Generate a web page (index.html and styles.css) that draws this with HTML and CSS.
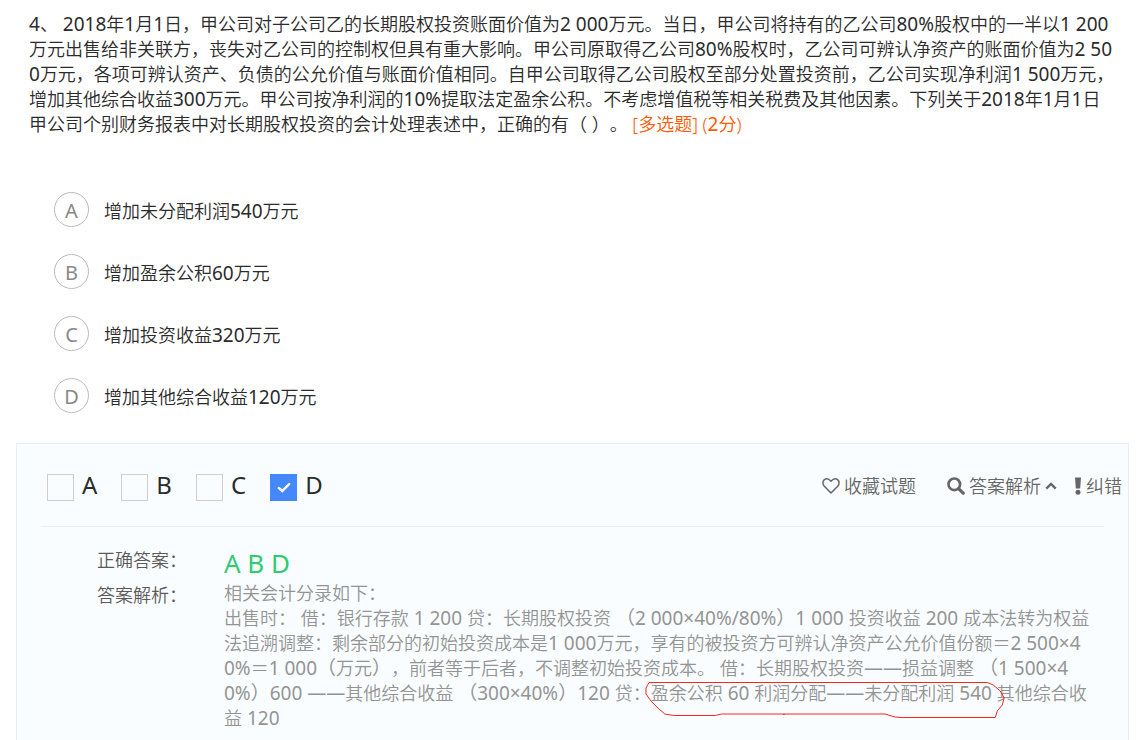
FILE: index.html
```html
<!DOCTYPE html>
<html lang="zh-CN">
<head>
    <meta charset="UTF-8">
    <meta name="viewport" content="width=device-width, initial-scale=1.0">
    <title>多选题</title>
    <link rel="stylesheet" href="styles.css">
</head>
<body>
    <div class="question">
        <p>
            <span class="num">4</span>、<span class="num"> 2018</span>年<span class="num">1</span>月<span class="num">1</span>日，甲公司对子公司乙的长期股权投资账面价值为<span class="num">2 000</span>万元。当日，甲公司将持有的乙公司<span class="num">80%</span>股权中的一半以<span class="num">1 200</span><br>万元出售给非关联方，丧失对乙公司的控制权但具有重大影响。甲公司原取得乙公司<span class="num">80%</span>股权时，乙公司可辨认净资产的账面价值为<span class="num">2 50</span><br><span class="num">0</span>万元，各项可辨认资产、负债的公允价值与账面价值相同。自甲公司取得乙公司股权至部分处置投资前，乙公司实现净利润<span class="num">1 500</span>万元，<br>增加其他综合收益<span class="num">300</span>万元。甲公司按净利润的<span class="num">10%</span>提取法定盈余公积。不考虑增值税等相关税费及其他因素。下列关于<span class="num">2018</span>年<span class="num">1</span>月<span class="num">1</span>日<br>甲公司个别财务报表中对长期股权投资的会计处理表述中，正确的有（ ）。 <span class="tag">[多选题] (<span class="num">2</span>分)</span>
        </p>
    </div>
    <ul class="options">
        <li><span class="letter">A</span><span class="option-text">增加未分配利润<span class="num">540</span>万元</span></li>
        <li><span class="letter">B</span><span class="option-text">增加盈余公积<span class="num">60</span>万元</span></li>
        <li><span class="letter">C</span><span class="option-text">增加投资收益<span class="num">320</span>万元</span></li>
        <li><span class="letter">D</span><span class="option-text">增加其他综合收益<span class="num">120</span>万元</span></li>
    </ul>
    <div class="panel">
        <div class="toolbar">
            <div class="choices">
                <label><input type="checkbox" name="answer" value="A"><span>A</span></label>
                <label><input type="checkbox" name="answer" value="B"><span>B</span></label>
                <label><input type="checkbox" name="answer" value="C"><span>C</span></label>
                <label><input type="checkbox" name="answer" value="D" checked><span>D</span></label>
            </div>
            <div class="actions">
                <button type="button" class="favorite">
                    <svg width="18" height="18" viewBox="0 0 18 18"><path d="M9 16 L2.3 9.2 C0.4 7.1 0.5 4.4 2.2 2.9 C4.1 1.3 6.8 1.7 9 4.3 C11.2 1.7 13.9 1.3 15.8 2.9 C17.5 4.4 17.6 7.1 15.7 9.2 Z" fill="none" stroke="currentColor" stroke-width="1.5" stroke-linejoin="round"/></svg>
                    <span>收藏试题</span>
                </button>
                <button type="button" class="analysis">
                    <svg width="18" height="18" viewBox="0 0 18 18"><circle cx="7.3" cy="7.3" r="5.8" fill="none" stroke="currentColor" stroke-width="2.7"/><path d="M11.8 11.8 L16.2 16.2" stroke="currentColor" stroke-width="3.2" stroke-linecap="round"/></svg>
                    <span>答案解析</span>
                    <svg width="12" height="8" viewBox="0 0 12 8"><path d="M1.3 6.7 L6 2 L10.7 6.7" fill="none" stroke="currentColor" stroke-width="2.4"/></svg>
                </button>
                <button type="button">
                    <svg width="8" height="18" viewBox="0 0 8 18"><path d="M1 0.5 H7 L6.2 11.5 H1.8 Z" fill="currentColor"/><circle cx="4" cy="15.3" r="2.5" fill="currentColor"/></svg>
                    <span>纠错</span>
                </button>
            </div>
        </div>
        <dl class="result">
            <dt>正确答案：</dt>
            <dd class="correct">A B D</dd>
            <dt class="explain-title">答案解析：</dt>
            <dd class="explain">
                相关会计分录如下：<br>出售时： 借：银行存款<span class="num"> 1 200 </span>贷：长期股权投资<span class="num"> （2 000×40%/80%）1 000 </span>投资收益<span class="num"> 200 </span>成本法转为权益<br>法追溯调整：剩余部分的初始投资成本是<span class="num">1 000</span>万元，享有的被投资方可辨认净资产公允价值份额＝<span class="num">2 500×4</span><br><span class="num">0%</span>＝<span class="num">1 000（</span>万元<span class="num">）</span>，前者等于后者，不调整初始投资成本。<span class="num"> </span>借：长期股权投资<span class="num">——</span>损益调整<span class="num"> （1 500×4</span><br><span class="num">0%）600 ——</span>其他综合收益<span class="num"> （300×40%）120 </span>贷：<span class="marked">盈余公积<span class="num"> 60 </span>利润分配<span class="num">——</span>未分配利润<span class="num"> 540</span><svg class="circle-mark" viewBox="0 0 364 38" preserveAspectRatio="none"><path d="M4 1.5 H345 L351 4 L358 10 L362 17 L360 24 L355 30 L353 36.5 H258 L252 36 L242 33 H140 V34 V33 H77 L71 34.5 H29 L20 33 L14 28 L6 20 L1 13 V7 Z"/></svg></span><span class="num"> </span>其他综合收<br>益<span class="num"> 120</span>
            </dd>
        </dl>
    </div>
</body>
</html>
```
FILE: styles.css
```css
* {
    box-sizing: border-box;
}
body {
    margin: 0;
    min-height: 100vh;
    display: flex;
    flex-direction: column;
    background-color: #ffffff;
    color: #2b2b2b;
    font-family: "Noto Sans", "Noto Sans CJK SC", sans-serif;
    font-size: 18px;
    font-weight: 350;
    line-height: 25px;
    text-spacing-trim: space-all;
}
/* digits run a little larger than the Chinese text */
.num {
    font-size: 19px;
    font-weight: 400;
    line-height: 1;
}
.question {
    padding: 12px 16px 0 29px;
    white-space: nowrap;
}
.question p {
    margin: 0;
}
.tag {
    color: #ff5a00;
}
.options {
    list-style: none;
    margin: 55px 0 0;
    padding: 0 54px;
    display: flex;
    flex-direction: column;
    gap: 27px;
}
.options li {
    display: flex;
    align-items: center;
    gap: 15px;
}
.letter {
    width: 35px;
    height: 35px;
    border: 1px solid #bbbbbb;
    border-radius: 50%;
    color: #888888;
    font-size: 20px;
    font-weight: 400;
    line-height: 35px;
    text-align: center;
}
.option-text {
    padding-top: 3px;
}
.panel {
    flex: 1;
    margin: 30px 13px 0 16px;
    border: 1px solid #e8eef7;
    border-bottom: none;
    background-color: #fafdff;
}
.toolbar {
    display: flex;
    justify-content: space-between;
    align-items: center;
    padding: 25px 6px 21px 30px;
}
.choices {
    display: flex;
    gap: 24px;
}
.choices label {
    display: flex;
    gap: 8px;
    height: 36px;
    align-items: center;
    font-size: 24px;
    font-weight: 400;
}
.choices span {
    padding-bottom: 6px;
}
.choices input {
    appearance: none;
    width: 27px;
    height: 27px;
    margin: 0;
    border: 1px solid #d2cec8;
    background-color: #fafdff;
}
.choices input:checked {
    border-color: #4488fb;
    background: #4488fb url("data:image/svg+xml,%3Csvg xmlns='http://www.w3.org/2000/svg' viewBox='0 0 16 12'%3E%3Cpath d='M2 6.5 L6 10 L14 2' fill='none' stroke='white' stroke-width='2.8' stroke-linecap='round'/%3E%3C/svg%3E") center / 14px 11px no-repeat;
}
.actions {
    display: flex;
    gap: 17px;
    padding-bottom: 2px;
}
.actions button {
    display: flex;
    align-items: center;
    gap: 4px;
    padding: 0;
    border: none;
    background: none;
    color: #666666;
    font: inherit;
    cursor: pointer;
}
.actions .favorite {
    margin-right: 14px;
}
.result {
    display: grid;
    grid-template-columns: 127px 1fr;
    margin: 0 24px;
    padding: 21px 0 8px 56px;
    border-top: 1px solid #e8eef7;
}
.result dt {
    color: #5a5a5a;
}
.result .explain-title {
    padding-top: 2px;
}
.result dd {
    margin: 0;
}
.result .correct {
    height: 33px;
    color: #2ecc71;
    font-size: 26px;
    font-weight: 400;
    line-height: 31px;
}
.result .explain {
    color: #949494;
    white-space: nowrap;
}
/* hand-drawn circle around the entry */
.marked {
    position: relative;
}
.circle-mark {
    position: absolute;
    left: -6px;
    top: 0;
    width: calc(100% + 20px);
    height: 38px;
    overflow: visible;
    pointer-events: none;
}
.circle-mark path {
    fill: none;
    stroke: #f5261c;
    stroke-width: 1;
}
```
